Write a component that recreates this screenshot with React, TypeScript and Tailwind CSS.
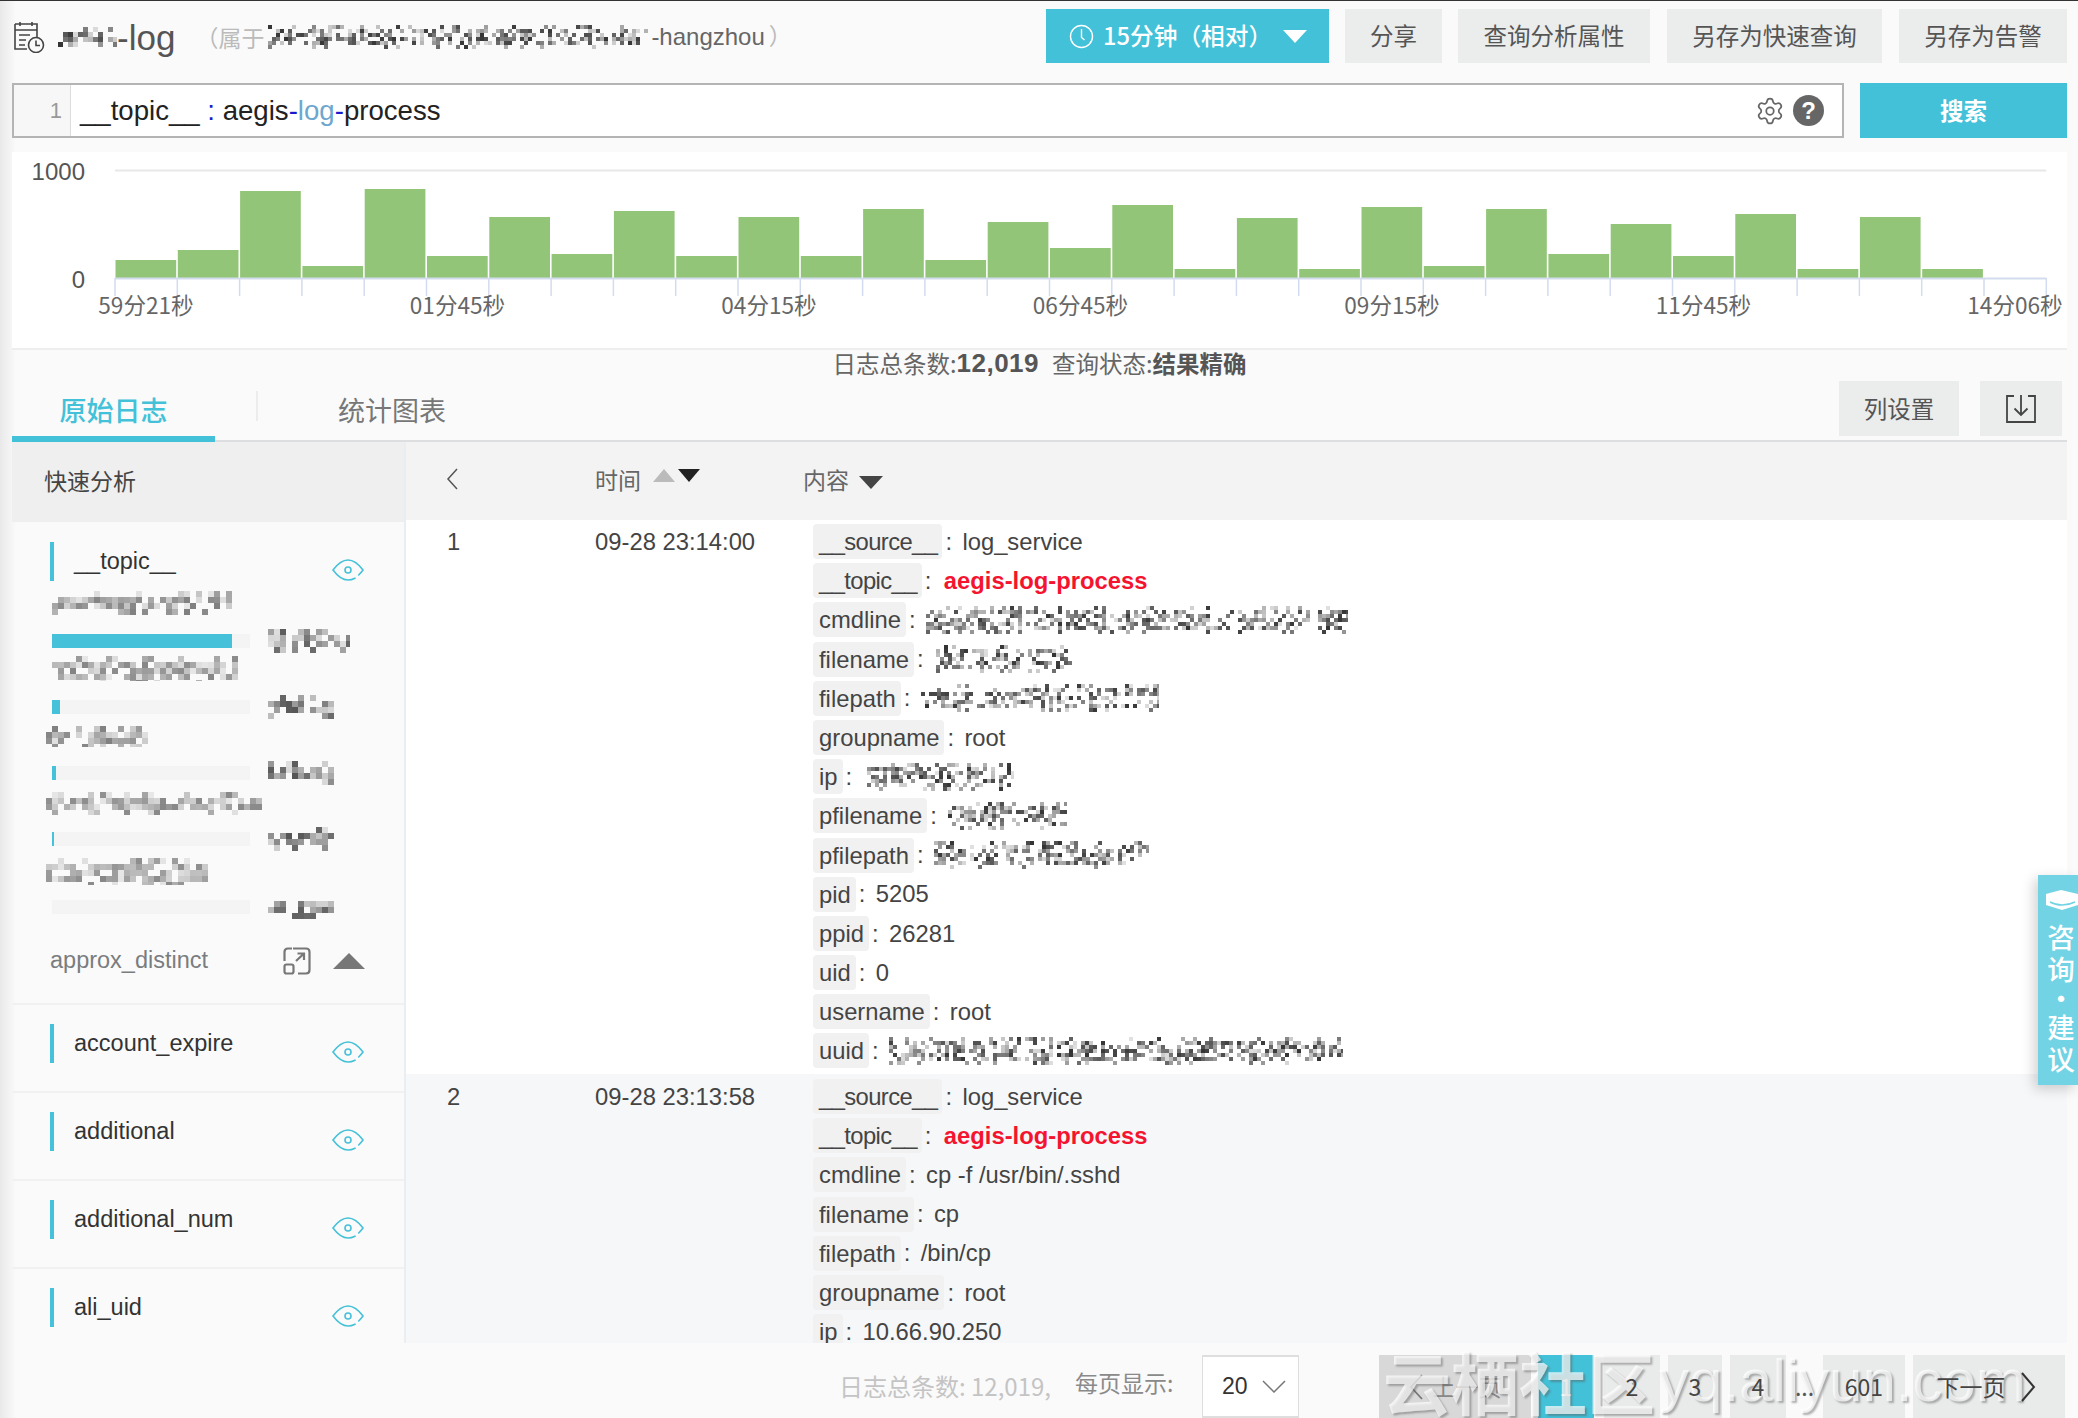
import React from "react";
import { Settings } from "lucide-react";

const rnd = (seed: number, i: number) => {
  const x = Math.sin(seed * 127.1 + i * 311.7) * 43758.5453;
  return x - Math.floor(x);
};

function Mosaic({ w, h, cw = 6, ch = 6, seed, color = "#555", density = 0.75, strength = 1, className = "" }: { w: number; h: number; cw?: number; ch?: number; seed: number; color?: string; density?: number; strength?: number; className?: string }) {
  const cells: React.ReactNode[] = [];
  const cols = Math.ceil(w / cw);
  const rows = Math.ceil(h / ch);
  let n = 0;
  for (let r = 0; r < rows; r++) {
    const edge = r === 0 || r === rows - 1 ? 0.45 : 1;
    for (let c = 0; c < cols; c++) {
      n++;
      const a = rnd(seed, n);
      if (a > density * edge) continue;
      const o = (0.15 + 0.85 * rnd(seed + 7, n)) * strength;
      cells.push(<rect key={n} x={c * cw} y={r * ch} width={cw} height={ch} fill={color} opacity={o} />);
    }
  }
  return (
    <svg width={w} height={h} shapeRendering="crispEdges" className={"block shrink-0 " + className}>
      {cells}
    </svg>
  );
}

const Eye = () => (
  <svg width="32" height="22" viewBox="0 0 32 22" fill="none" stroke="#45c1d9" strokeWidth="1.6" className="shrink-0">
    <path d="M23 19.2C20.8 20.3 18.4 21 16 21C10.5 21 5.5 17 1 11C5.5 5 10.5 1 16 1C21.5 1 26.5 5 31 11C29.6 12.9 28.2 14.5 26.7 16" strokeLinecap="round" />
    <circle cx="16" cy="11" r="3" />
  </svg>
);

const Field = ({ name, last }: { name: string; last?: boolean }) => (
  <div className={"h-[88px] flex items-start pt-[19px] pl-[38px] " + (last ? "" : "border-b-2 border-[#f1f1f1]")}>
    <div className="w-[4px] h-[39px] bg-[#45c1d9]" />
    <div className="ml-[20px] leading-[39px] text-[23.5px] text-[#333]">{name}</div>
    <div className="ml-auto mr-[40px] mt-[17px]"><Eye /></div>
  </div>
);

const BarBlock = ({ fill, countW, seed }: { fill: number; countW: number; seed: number }) => (
  <div className="flex items-center h-[24px] pl-[40px]">
    <div className="w-[198px] h-[14px] bg-[#f4f4f4] shrink-0">
      <div className="h-full bg-[#45c1d9]" style={{ width: fill }} />
    </div>
    <Mosaic w={countW} h={24} seed={seed} className="ml-[18px]" />
  </div>
);

const barTops = [260, 250, 191, 266, 189, 256, 217, 254, 211, 256, 217, 256, 209, 260, 222, 248, 205, 269, 218, 269, 207, 266, 209, 254, 224, 256, 214, 269, 217, 269];
const X0 = 103;
const SLOT = 62.3;
const chartLabels = ["59分21秒", "01分45秒", "04分15秒", "06分45秒", "09分15秒", "11分45秒", "14分06秒"];
const cjk = "'Noto Sans CJK SC','Liberation Sans',sans-serif";

function Chart() {
  return (
    <svg width="2055" height="196" className="block">
      <line x1={X0} x2={X0 + 31 * SLOT} y1={18.5} y2={18.5} stroke="#e8e8e8" strokeWidth="2" />
      <text x="73" y="28" textAnchor="end" fontSize="24" fill="#555" fontFamily="'Liberation Sans',sans-serif">1000</text>
      <text x="73" y="136" textAnchor="end" fontSize="24" fill="#555" fontFamily="'Liberation Sans',sans-serif">0</text>
      {barTops.map((t, i) => (
        <rect key={i} x={X0 + i * SLOT + 0.5} y={t - 152} width={SLOT - 1.6} height={278 - t} fill="#93c578" />
      ))}
      <line x1={X0} x2={X0 + 31 * SLOT} y1={126.5} y2={126.5} stroke="#d3dcee" strokeWidth="2" />
      {Array.from({ length: 32 }).map((_, i) => (
        <line key={i} x1={X0 + i * SLOT} x2={X0 + i * SLOT} y1={126} y2={144} stroke="#d3dcee" strokeWidth="1.5" />
      ))}
      {chartLabels.map((l, i) => (
        <text key={l} x={134 + i * 311.5} y={162} textAnchor="middle" fontSize="22.6" fill="#666" fontFamily={cjk}>{l}</text>
      ))}
    </svg>
  );
}

type KV = { k: string; v?: string; red?: boolean; m?: [number, number, string?]; u?: boolean };
const KVRow = ({ k, v, red, m, u }: KV) => (
  <div className="flex items-center h-[35px] mb-[4.2px] ml-[10px]">
    <div className={"h-[35px] leading-[35px] bg-[#f1f1f1] rounded-[4px] pl-[6px] pr-[5px] text-[#444] " + (u ? "tracking-[-0.6px]" : "")}>{k}</div>
    <div className="w-[20px] pl-[3px] text-[#444]">:</div>
    {red && <div className="ml-[2px] font-bold text-[#f5142f]">{v}</div>}
    {!red && v && <div className="text-[#444]">{v}</div>}
    {m && <Mosaic w={m[0]} h={28} cw={4} ch={4} seed={m[1]} color="#333" density={0.5} className={"blur-[0.7px] " + (m[2] || "")} />}
  </div>
);

const row1: KV[] = [
  { k: "__source__", v: "log_service", u: true },
  { k: "__topic__", v: "aegis-log-process", red: true, u: true },
  { k: "cmdline", m: [422, 3] },
  { k: "filename", m: [136, 5, "ml-[2px]"] },
  { k: "filepath", m: [238, 8] },
  { k: "groupname", v: "root" },
  { k: "ip", m: [147, 11, "ml-[4px]"] },
  { k: "pfilename", m: [119, 13, "ml-[1px]"] },
  { k: "pfilepath", m: [215, 17] },
  { k: "pid", v: "5205" },
  { k: "ppid", v: "26281" },
  { k: "uid", v: "0" },
  { k: "username", v: "root" },
  { k: "uuid", m: [454, 19] },
];
const row2: KV[] = [
  { k: "__source__", v: "log_service", u: true },
  { k: "__topic__", v: "aegis-log-process", red: true, u: true },
  { k: "cmdline", v: "cp -f /usr/bin/.sshd" },
  { k: "filename", v: "cp" },
  { k: "filepath", v: "/bin/cp" },
  { k: "groupname", v: "root" },
  { k: "ip", v: "10.66.90.250" },
];

const TopBtn = ({ w, children, cls = "" }: { w: string; children: React.ReactNode; cls?: string }) => (
  <div className={w + " h-[54px] bg-[#ebecec] flex items-center justify-center text-[#555] text-[23.5px] shrink-0 " + cls}>{children}</div>
);

const Pg = ({ w, children, cls = "bg-[#e9ebea] text-[#444]", ml }: { w: string; children: React.ReactNode; cls?: string; ml: string }) => (
  <div className={w + " " + ml + " h-[63px] flex items-center justify-center text-[23px] shrink-0 " + cls}>{children}</div>
);

export default function App() {
  return (
    <div
      className="relative w-[2078px] h-[1418px] overflow-hidden border-t border-[#333] pl-[12px] pr-[11px] bg-[linear-gradient(to_right,#e9e9e9,#fafafa_16px)]"
      style={{ fontFamily: "'Liberation Sans','Noto Sans CJK SC',sans-serif" }}
    >
      {/* header */}
      <div className="h-[82px] flex items-start">
        <div className="flex items-center h-[72px]">
          <svg width="32" height="32" viewBox="0 0 32 32" fill="none" stroke="#444" strokeWidth="1.6" className="ml-[1px] shrink-0">
            <path d="M2 3H24V17M2 3V28H14M2 9H24M7 1V5M19 1V5M6 14H17M6 19H13M6 24H12" />
            <circle cx="23" cy="24" r="7.5" />
            <path d="M23 19.5V24.5H27" />
          </svg>
          <Mosaic w={59} h={20} cw={5} ch={5} seed={23} color="#333" className="ml-[13px] blur-[0.5px]" />
          <span className="text-[35px] text-[#555] font-light leading-none">-log</span>
          <span className="ml-[20px] text-[23px] text-[#bbb]" style={{ fontFamily: cjk }}>（属于</span>
          <Mosaic w={383} h={24} cw={4} ch={4} seed={29} color="#333" density={0.5} className="ml-[4px] blur-[0.6px]" />
          <span className="text-[24px] text-[#666]">-hangzhou</span>
          <span className="text-[23px] text-[#bbb] ml-[4px]">）</span>
        </div>
        <div className="ml-auto flex gap-[16px] pt-[8px]" style={{ fontFamily: cjk }}>
          <div className="w-[283px] h-[54px] bg-[#42c1d8] text-white text-[23.7px] font-medium flex items-center pl-[23px] shrink-0">
            <svg width="25" height="25" viewBox="0 0 25 25" fill="none" stroke="#fff" strokeWidth="1.4" className="shrink-0">
              <circle cx="12.5" cy="12.5" r="11" />
              <path d="M12.5 5V13.5L15.5 16" />
            </svg>
            <span className="ml-[9px]">15分钟（相对）</span>
            <div className="ml-[11px] w-0 h-0 border-l-[12px] border-r-[12px] border-t-[13px] border-l-transparent border-r-transparent border-t-white" />
          </div>
          <TopBtn w="w-[97px]">分享</TopBtn>
          <TopBtn w="w-[192px]">查询分析属性</TopBtn>
          <TopBtn w="w-[215px]" cls="ml-[1px]">另存为快速查询</TopBtn>
          <TopBtn w="w-[168px]" cls="ml-[1px]">另存为告警</TopBtn>
        </div>
      </div>

      {/* query */}
      <div className="h-[69px] flex items-start">
        <div className="w-[1832px] h-[55px] border-2 border-[#b4b4b4] bg-white flex items-stretch">
          <div className="w-[57px] bg-[#f7f7f7] border-r border-[#ddd] text-right pr-[8px] text-[22px] text-[#999] leading-[51px] shrink-0">1</div>
          <div className="ml-[9px] text-[27.6px] text-[#222] leading-[51px] whitespace-pre">
            __topic__ <span className="text-[#1a1acc]">:</span> aegis<span className="text-[#1a1acc]">-</span><span className="text-[#6ea7ce]">log</span><span className="text-[#1a1acc]">-</span>process
          </div>
          <div className="ml-auto flex items-center pr-[18px]">
            <Settings size={30} strokeWidth={1.4} color="#666" />
            <div className="ml-[8px] w-[31px] h-[31px] rounded-full bg-[#666] text-white font-bold text-[24px] flex items-center justify-center">?</div>
          </div>
        </div>
        <div className="ml-[16px] w-[207px] h-[55px] bg-[#42c1d8] text-white text-[23.5px] font-bold flex items-center justify-center" style={{ fontFamily: cjk }}>搜索</div>
      </div>

      {/* chart */}
      <div className="h-[198px] bg-white border-b-2 border-[#eeeeee]">
        <Chart />
      </div>

      {/* status */}
      <div className="h-[35px] flex items-center justify-center pb-[8px] text-[23.5px] text-[#666]" style={{ fontFamily: cjk }}>
        日志总条数:<span className="font-bold text-[#555] text-[26px] tracking-[0.5px]" style={{ fontFamily: "'Liberation Sans',sans-serif" }}>12,019</span>
        <span className="ml-[13px]">查询状态:</span><span className="font-bold text-[#555]">结果精确</span>
      </div>

      {/* tabs */}
      <div className="h-[57px] flex items-start border-b-2 border-[#dcdee0] relative" style={{ fontFamily: cjk }}>
        <div className="w-[203px] h-[57px] border-b-[6px] border-[#42c1d8] text-[#42c1d8] text-[27px] leading-[50px] text-center font-medium -mb-[2px]">原始日志</div>
        <div className="ml-[41px] mt-[6px] w-[2px] h-[30px] bg-[#ececec]" />
        <div className="ml-[80px] text-[27px] text-[#777] leading-[50px]">统计图表</div>
        <div className="ml-auto mr-[5px] flex">
          <div className="w-[120px] h-[55px] mt-[-4px] bg-[#ebecec] flex items-center justify-center text-[23.5px] text-[#555]">列设置</div>
          <div className="ml-[21px] w-[82px] h-[55px] mt-[-4px] bg-[#ebecec] flex items-center justify-center">
            <svg width="32" height="30" viewBox="0 0 32 30" fill="none" stroke="#444" strokeWidth="1.8">
              <path d="M9 2H2V28H30V2H23M16 1V21M9.5 14.5L16 21L22.5 14.5" />
            </svg>
          </div>
        </div>
      </div>

      {/* main */}
      <div className="h-[901px] flex overflow-hidden">
        <div className="w-[392px] shrink-0 overflow-hidden">
          <div className="h-[80px] bg-[#efefef] flex items-center pl-[32px] pb-[4px] text-[23px] text-[#444]" style={{ fontFamily: cjk }}>快速分析</div>
          <div className="h-[59px] flex items-start pt-[20px] pl-[38px]">
            <div className="w-[4px] h-[39px] bg-[#45c1d9]" />
            <div className="ml-[20px] leading-[39px] text-[23.5px] text-[#333]">__topic__</div>
            <div className="ml-auto mr-[40px] mt-[17px]"><Eye /></div>
          </div>
          <Mosaic w={186} h={24} seed={31} className="ml-[40px] mt-[10px]" strength={0.75} />
          <div className="mt-[14px]"><BarBlock fill={180} countW={82} seed={37} /></div>
          <Mosaic w={186} h={25} seed={41} className="ml-[40px] mt-[3px]" strength={0.75} />
          <div className="mt-[14px]"><BarBlock fill={8} countW={66} seed={43} /></div>
          <Mosaic w={102} h={21} seed={47} className="ml-[34px] mt-[7px]" strength={0.75} />
          <div className="mt-[14px]"><BarBlock fill={4} countW={66} seed={53} /></div>
          <Mosaic w={216} h={23} seed={59} className="ml-[34px] mt-[7px]" strength={0.7} />
          <div className="mt-[12px]"><BarBlock fill={2} countW={66} seed={61} /></div>
          <Mosaic w={162} h={27} seed={67} className="ml-[34px] mt-[7px]" strength={0.7} />
          <div className="mt-[10px]"><BarBlock fill={0} countW={66} seed={71} /></div>
          <div className="mt-[27px] h-[30px] flex items-center pl-[38px]">
            <span className="text-[23.5px] text-[#7a7d80]">approx_distinct</span>
            <svg width="28" height="28" viewBox="0 0 28 28" fill="none" stroke="#777" strokeWidth="2.2" className="ml-[75px] shrink-0">
              <path d="M10 1.5H23C25 1.5 26.5 3 26.5 5V23C26.5 25 25 26.5 23 26.5H15M1.5 14V5C1.5 3 3 1.5 5 1.5H9" />
              <rect x="1.5" y="17.5" width="9" height="9" rx="2" />
              <path d="M13 14L21 6.5M14.5 6.5H21V13" />
            </svg>
            <div className="ml-[22px] w-0 h-0 border-l-[16px] border-r-[16px] border-b-[16px] border-l-transparent border-r-transparent border-b-[#777]" />
          </div>
          <div className="mt-[27px] h-[2px] bg-[#f1f1f1]" />
          <Field name="account_expire" />
          <Field name="additional" />
          <Field name="additional_num" />
          <Field name="ali_uid" last />
        </div>

        <div className="flex-1 min-w-0 border-l-2 border-[#e9eef3] text-[23.8px] overflow-hidden">
          <div className="h-[78px] bg-[#f3f3f3] flex items-center pb-[4px] text-[#666]">
            <div className="w-[189px] pl-[40px] shrink-0">
              <svg width="12" height="22" viewBox="0 0 12 22" fill="none" stroke="#555" strokeWidth="1.5"><path d="M11 1L2 11L11 21" /></svg>
            </div>
            <div className="w-[208px] flex items-center shrink-0" style={{ fontFamily: cjk }}>
              <span className="text-[23px]">时间</span>
              <svg width="48" height="14" viewBox="0 0 48 14" className="ml-[12px] mb-[6px]">
                <path d="M0 13L11 0L22 13Z" fill="#bbb" />
                <path d="M25 0H47L36 13Z" fill="#222" />
              </svg>
            </div>
            <div className="flex items-center" style={{ fontFamily: cjk }}>
              <span className="text-[23px]">内容</span>
              <svg width="24" height="13" viewBox="0 0 24 13" className="ml-[10px] mt-[6px]"><path d="M0 0H24L12 13Z" fill="#444" /></svg>
            </div>
          </div>
          <div className="h-[554px] bg-white flex pt-[4px]">
            <div className="w-[189px] pl-[41px] leading-[35px] text-[#444] shrink-0">1</div>
            <div className="w-[208px] leading-[35px] text-[#444] shrink-0">09-28 23:14:00</div>
            <div>{row1.map((r) => <KVRow key={r.k} {...r} />)}</div>
          </div>
          <div className="h-[300px] bg-[#f6f7f9] flex pt-[5px]">
            <div className="w-[189px] pl-[41px] leading-[35px] text-[#444] shrink-0">2</div>
            <div className="w-[208px] leading-[35px] text-[#444] shrink-0">09-28 23:13:58</div>
            <div>{row2.map((r) => <KVRow key={r.k} {...r} />)}</div>
          </div>
        </div>
      </div>

      {/* footer */}
      <div className="h-[75px] flex items-start pt-[12px]" style={{ fontFamily: cjk }}>
        <span className="ml-[827px] mt-[19px] text-[24px] text-[#c4c4c4] leading-none w-[236px] shrink-0 whitespace-nowrap">日志总条数: 12,019,</span>
        <span className="mt-[16px] text-[23px] text-[#8a8a8a] leading-none w-[127px] shrink-0 whitespace-nowrap">每页显示:</span>
        <div className="w-[97px] h-[63px] bg-white border-y-2 border-x border-[#dedede] flex items-center pl-[19px] text-[23px] text-[#333] shrink-0" style={{ fontFamily: "'Liberation Sans',sans-serif" }}>
          20
          <svg width="24" height="13" viewBox="0 0 24 13" fill="none" stroke="#777" strokeWidth="1.5" className="ml-[14px]"><path d="M1 1L12 12L23 1" /></svg>
        </div>
        <Pg w="w-[152px]" ml="ml-[80px]" cls="bg-[#d8d8d8] text-[#888]">
          <svg width="14" height="26" viewBox="0 0 14 26" fill="none" stroke="#777" strokeWidth="1.8" className="mr-[10px]"><path d="M13 1L2 13L13 25" /></svg>上一页
        </Pg>
        <Pg w="w-[56px]" ml="ml-[7px]" cls="bg-[#42c1d8] text-white">1</Pg>
        <Pg w="w-[56px]" ml="ml-[10px]"><span className="relative z-20">2</span></Pg>
        <Pg w="w-[54px]" ml="ml-[8px]"><span className="relative z-20">3</span></Pg>
        <Pg w="w-[56px]" ml="ml-[8px]"><span className="relative z-20">4</span></Pg>
        <div className="w-[37px] h-[63px] flex items-center justify-center text-[23px] text-[#555] shrink-0"><span className="relative z-20">...</span></div>
        <Pg w="w-[82px]" ml=""><span className="relative z-20">601</span></Pg>
        <Pg w="w-[152px]" ml="ml-[8px]">
          <span className="relative z-20 -ml-[6px]">下一页</span>
          <svg width="16" height="30" viewBox="0 0 16 30" fill="none" stroke="#333" strokeWidth="2" className="relative z-20 ml-[14px]"><path d="M2 1L14 15L2 29" /></svg>
        </Pg>
      </div>

      {/* watermark */}
      <div className="absolute z-10 left-[1383px] top-[1342px] flex items-center h-[76px] text-white/70 pointer-events-none whitespace-nowrap [text-shadow:2px_2px_2px_rgba(90,90,90,0.45)]">
        <span className="text-[68px] font-bold leading-none" style={{ fontFamily: cjk }}>云栖社区</span>
        <span className="ml-[4px] text-[60px] leading-none">yq.aliyun.com</span>
      </div>

      {/* consult tab */}
      <div className="absolute z-30 left-[2038px] top-[874px] w-[40px] h-[210px] bg-[#72d3e5] shadow-[-4px_4px_12px_rgba(0,0,0,0.18)] overflow-hidden flex flex-col items-center text-white text-[27.5px] font-medium leading-[32px]" style={{ fontFamily: cjk }}>
        <svg width="34" height="22" viewBox="0 0 34 22" className="mt-[14px] ml-[8px] shrink-0">
          <path d="M1 5L16 1L33 5V16L17 21L1 16Z" fill="#fff" />
          <path d="M5 13C12 17 22 17 30 13" stroke="#72d3e5" strokeWidth="1.5" fill="none" />
        </svg>
        <div className="mt-[9px] ml-[6px]">咨</div>
        <div className="ml-[6px]">询</div>
        <div className="ml-[6px] -my-[3px]">·</div>
        <div className="ml-[6px]">建</div>
        <div className="ml-[6px]">议</div>
      </div>
    </div>
  );
}
